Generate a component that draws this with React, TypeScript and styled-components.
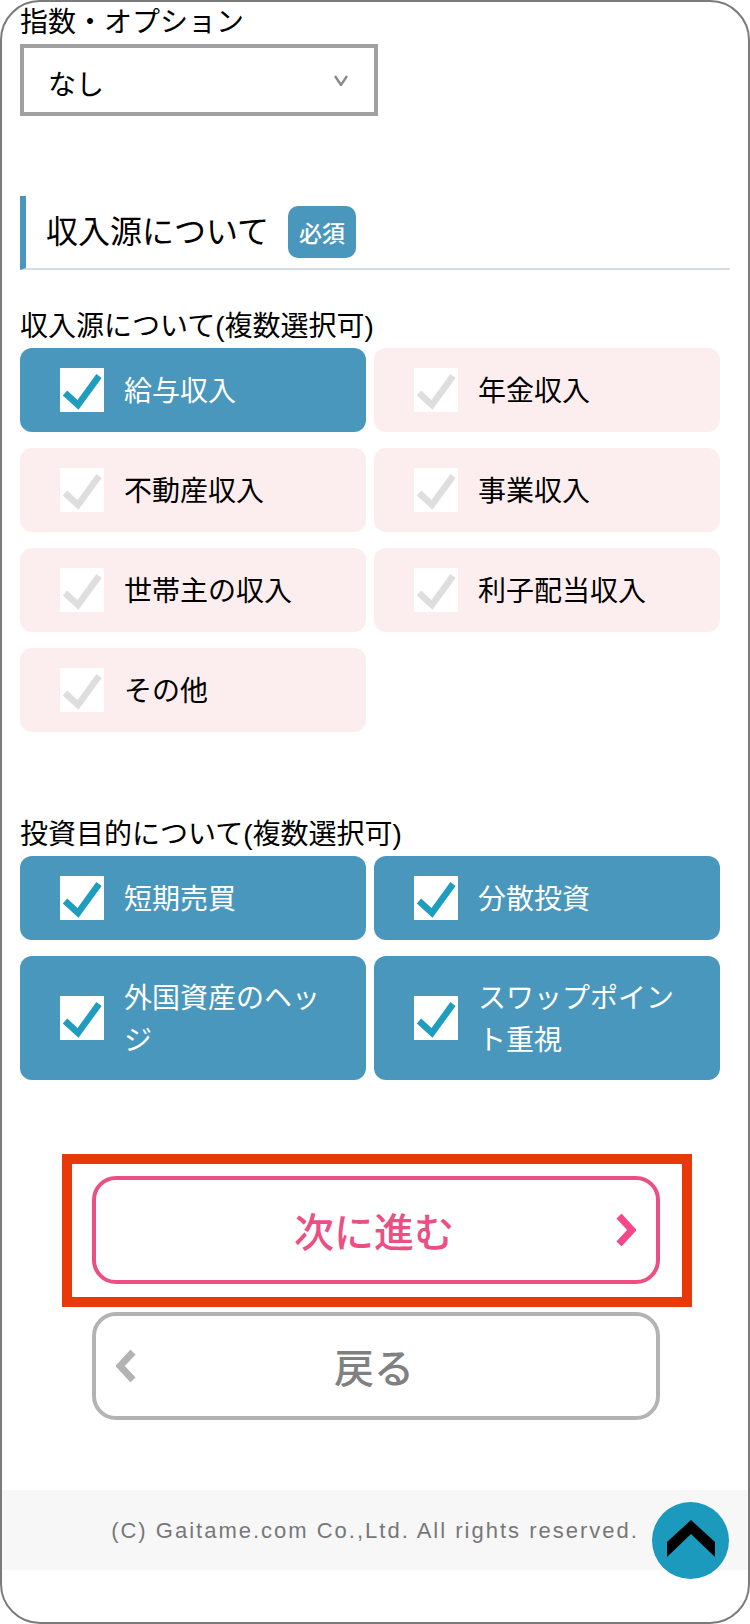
import styled, { createGlobalStyle } from "styled-components";

const incomeItems = [
    { label: "給与収入", checked: true },
    { label: "年金収入", checked: false },
    { label: "不動産収入", checked: false },
    { label: "事業収入", checked: false },
    { label: "世帯主の収入", checked: false },
    { label: "利子配当収入", checked: false },
    { label: "その他", checked: false },
];

const purposeItems = [
    { label: "短期売買", checked: true },
    { label: "分散投資", checked: true },
    { label: "外国資産のヘッジ", checked: true },
    { label: "スワップポイント重視", checked: true },
];

const CheckItem = ({ label, checked }: { label: string; checked: boolean }) => (
    <Option $checked={checked}>
        <CheckBox>
            <svg width="44" height="44" viewBox="0 0 44 44">
                <path
                    d="M5 25 L18 37 L39 8"
                    fill="none"
                    stroke={checked ? "#1f9dbf" : "#dedede"}
                    strokeWidth="6.5"
                />
            </svg>
        </CheckBox>
        <OptionText>{label}</OptionText>
    </Option>
);

export default function App() {
    return (
        <>
            <GlobalStyle />
            <Frame>
                <Content>
                    <FieldLabel>指数・オプション</FieldLabel>
                    <SelectBox>
                        <SelectValue>なし</SelectValue>
                        <svg width="14" height="11" viewBox="0 0 14 11">
                            <path d="M1 1 L7 10 L13 1" fill="none" stroke="#8a8a8a" strokeWidth="2.4" />
                        </svg>
                    </SelectBox>

                    <SectionHead>
                        <SectionTitle>収入源について</SectionTitle>
                        <Required>必須</Required>
                    </SectionHead>

                    <GroupLabel>収入源について(複数選択可)</GroupLabel>
                    <OptionGrid>
                        {incomeItems.map((item) => (
                            <CheckItem key={item.label} {...item} />
                        ))}
                    </OptionGrid>

                    <PurposeLabel>投資目的について(複数選択可)</PurposeLabel>
                    <OptionGrid>
                        {purposeItems.map((item) => (
                            <CheckItem key={item.label} {...item} />
                        ))}
                    </OptionGrid>
                </Content>

                <Highlight>
                    <ActionButton $color="#ec5083">
                        次に進む
                        <NextArrow width="20" height="32" viewBox="0 0 20 32">
                            <path d="M3 2 L16 16 L3 30" fill="none" stroke="#f5478a" strokeWidth="7" />
                        </NextArrow>
                    </ActionButton>
                </Highlight>
                <BackRow>
                    <ActionButton $color="#b3b3b3" $textColor="#808080">
                        <BackArrow width="20" height="32" viewBox="0 0 20 32">
                            <path d="M17 2 L4 16 L17 30" fill="none" stroke="#b3b3b3" strokeWidth="7" />
                        </BackArrow>
                        戻る
                    </ActionButton>
                </BackRow>

                <Footer>(C) Gaitame.com Co.,Ltd. All rights reserved.</Footer>
                <TopButton>
                    <svg width="48" height="37" viewBox="0 0 48 37">
                        <path d="M24 0 L48 22 L48 37 L24 14 L0 37 L0 22 Z" fill="#000" />
                    </svg>
                </TopButton>
            </Frame>
        </>
    );
}

const GlobalStyle = createGlobalStyle`
    html, body {
        margin: 0;
        padding: 0;
        background: #fff;
    }

    body {
        font-family: "Liberation Sans", "Noto Sans CJK JP", sans-serif;
        color: #000;
    }
`;

const Frame = styled.div`
    position: relative;
    box-sizing: border-box;
    width: 750px;
    height: 1624px;
    border: 2px solid #7b7b7b;
    border-radius: 40px;
    overflow: hidden;
    background: #fff;
`;

const Content = styled.main`
    padding-left: 18px;
`;

const FieldLabel = styled.div`
    font-size: 28px;
    line-height: 42px;
`;

const GroupLabel = styled(FieldLabel)`
    margin-top: 36px;
`;

const PurposeLabel = styled(FieldLabel)`
    margin-top: 82px;
`;

const SelectBox = styled.div`
    box-sizing: border-box;
    display: flex;
    align-items: center;
    justify-content: space-between;
    width: 358px;
    height: 72px;
    padding: 0 26px 0 24px;
    border: 4px solid #a0a0a0;
`;

const SelectValue = styled.span`
    padding-top: 6px;
    font-size: 28px;
`;

const SectionHead = styled.div`
    box-sizing: border-box;
    display: flex;
    align-items: center;
    gap: 19px;
    width: 710px;
    height: 74px;
    margin-top: 80px;
    padding-left: 20px;
    border-left: 6px solid #4a97bd;
    border-bottom: 2px solid #d5dde2;
`;

const SectionTitle = styled.h2`
    margin: 0;
    padding-bottom: 6px;
    font-size: 32px;
    font-weight: 400;
`;

const Required = styled.span`
    display: flex;
    align-items: center;
    justify-content: center;
    width: 68px;
    height: 52px;
    border-radius: 10px;
    background: #4a97bd;
    color: #fff;
    font-size: 23px;
    font-weight: 500;
`;

const OptionGrid = styled.div`
    display: grid;
    grid-template-columns: 346px 346px;
    column-gap: 8px;
    row-gap: 16px;
`;

const Option = styled.label<{ $checked: boolean }>`
    display: flex;
    align-items: center;
    gap: 20px;
    padding: 20px 30px 20px 40px;
    border-radius: 12px;
    background: ${({ $checked }) => ($checked ? "#4a97bd" : "#fceeee")};
    color: ${({ $checked }) => ($checked ? "#fff" : "#000")};
`;

const CheckBox = styled.span`
    flex: none;
    width: 44px;
    height: 44px;
    background: #fff;

    svg {
        display: block;
    }
`;

const OptionText = styled.span`
    padding-top: 2px;
    margin-bottom: -2px;
    font-size: 28px;
    line-height: 42px;
`;

const Highlight = styled.div`
    box-sizing: border-box;
    width: 630px;
    margin: 74px 0 0 60px;
    padding: 12px 20px 13px;
    border: 10px solid #e8390b;
`;

const BackRow = styled.div`
    margin: 5px 0 0 90px;
`;

const ActionButton = styled.button<{ $color: string; $textColor?: string }>`
    position: relative;
    display: flex;
    align-items: center;
    justify-content: center;
    box-sizing: border-box;
    width: 568px;
    height: 108px;
    padding: 0 4px 0 0;
    border: 4px solid ${({ $color }) => $color};
    border-radius: 24px;
    background: #fff;
    color: ${({ $color, $textColor }) => $textColor ?? $color};
    font-family: inherit;
    font-size: 40px;
    font-weight: 500;
`;

const NextArrow = styled.svg`
    position: absolute;
    right: 20px;
    top: 34px;
`;

const BackArrow = styled.svg`
    position: absolute;
    left: 20px;
    top: 34px;
`;

const Footer = styled.footer`
    height: 80px;
    margin-top: 70px;
    background: #f7f7f7;
    color: #777;
    font-size: 22px;
    line-height: 82px;
    letter-spacing: 2px;
    text-align: center;
`;

const TopButton = styled.div`
    position: absolute;
    left: 650px;
    top: 1500px;
    display: flex;
    align-items: center;
    justify-content: center;
    width: 77px;
    height: 77px;
    padding-bottom: 4px;
    box-sizing: border-box;
    border-radius: 50%;
    background: #1b9abd;
`;
